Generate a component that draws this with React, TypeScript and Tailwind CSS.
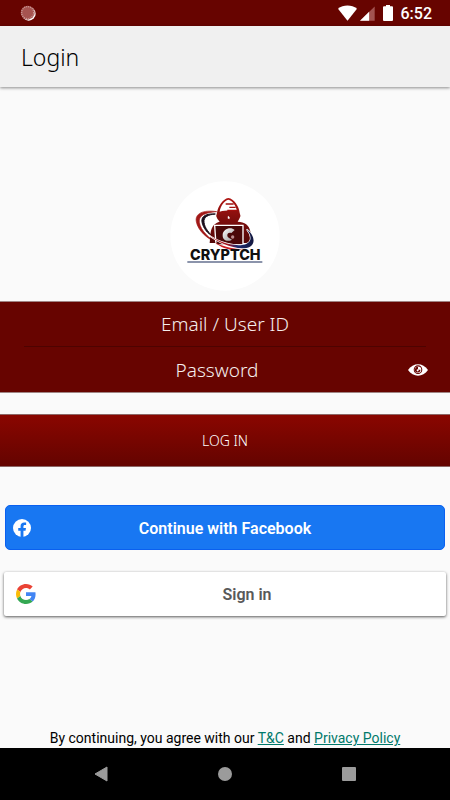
import React, { useState } from 'react'

function SyncIcon() {
    return (
        <svg viewBox="0 0 48 48" className="h-4 w-4" aria-hidden="true">
            <circle cx="26" cy="26" r="21" fill="#ffffff" />
            <circle cx="23" cy="23" r="21" fill="#a65350" />
            <circle cx="23" cy="23" r="18" fill="none" stroke="#c99a98" strokeWidth="4" strokeDasharray="3 3" />
        </svg>
    )
}

function StatusBar() {
    return (
        <div className="flex h-[26px] shrink-0 items-center justify-between bg-[#670400] pr-[18px] pl-5 text-white">
            <SyncIcon />
            <div className="flex items-center">
                <svg viewBox="0 0 57 48" className="h-4 w-[19px]" aria-hidden="true">
                    <path d="M0 11 C16 -2 41 -2 57 11 L28.500 47 Z" fill="#ffffff" />
                </svg>
                <svg viewBox="0 0 46 48" className="ml-[3px] h-4 w-[15px]" aria-hidden="true">
                    <path d="M45 4 V48 H0 Z" fill="#a35350" />
                    <path d="M28 20 V48 H0 Z" fill="#ffffff" />
                </svg>
                <svg viewBox="0 0 30 48" className="ml-2 h-4 w-[10px]" aria-hidden="true">
                    <path d="M9 0 H21 V4 H27 Q30 4 30 7 V45 Q30 48 27 48 H3 Q0 48 0 45 V7 Q0 4 3 4 H9 Z" fill="#ffffff" />
                </svg>
                <span className="ml-2 pt-0.5 text-base leading-6 font-medium">6:52</span>
            </div>
        </div>
    )
}

function Logo() {
    return (
        <svg viewBox="0 0 330 330" className="h-[110px] w-[110px]" role="img" aria-label="Cryptch">
            <defs>
                <linearGradient id="hood" x1="0" y1="0" x2="0" y2="1">
                    <stop offset="0" stopColor="#b01512" />
                    <stop offset="0.5" stopColor="#7d0d0c" />
                    <stop offset="1" stopColor="#520707" />
                </linearGradient>
                <linearGradient id="orbit" x1="0" y1="0" x2="1" y2="0">
                    <stop offset="0" stopColor="#b5181a" />
                    <stop offset="0.45" stopColor="#a01622" />
                    <stop offset="0.65" stopColor="#1c2d72" />
                    <stop offset="1" stopColor="#14183f" />
                </linearGradient>
                <linearGradient id="letter" x1="0" y1="0" x2="1" y2="1">
                    <stop offset="0" stopColor="#ffffff" />
                    <stop offset="1" stopColor="#9a9a9a" />
                </linearGradient>
            </defs>
            <circle cx="165" cy="165" r="164" fill="#ffffff" />
            {/* orbit, left side */}
            <path d="M140 92 C100 86 74 97 79 122 C84 148 108 172 146 188 C116 172 92 149 88 124 C85 104 105 94 140 92 Z" fill="#a11817" stroke="#a11817" strokeWidth="2" />
            <path d="M136 99 C109 97 93 105 96 123 C99 141 113 158 132 171 C117 156 104 141 102 124 C100 108 114 101 136 99 Z" fill="#190d1b" stroke="#190d1b" strokeWidth="3" />
            {/* hood and shoulders */}
            <path d="M175 51 C192 53 207 76 209 95 Q214 104 208 113 L203 122 C224 123 238 132 241 151 L246 186 H119 L122 154 C125 135 136 125 149 122 L142 113 Q136 104 141 95 C144 76 159 53 175 51 Z" fill="url(#hood)" />
            <path d="M175 56 C187 58 198 74 201 90 C188 88 165 88 149 92 C151 75 163 59 175 56 Z" fill="#ffffff" />
            <path d="M167 69 H191 M178 79 H197 M172 88 H201" stroke="#a3100e" strokeWidth="4" />
            <path d="M174 104 L179 109 L178 115 L173 112 Z" fill="#ffffff" />
            {/* laptop */}
            <path d="M134 133 H219 V192 H138 Z" fill="#4a0808" stroke="#ffffff" strokeWidth="4" />
            <path d="M194 147 C182 136 159 144 158 161 C157 178 172 184 186 176 L176 170 C169 166 171 152 184 156 Z" fill="url(#letter)" />
            <circle cx="188" cy="168" r="5" fill="#b98a8b" />
            {/* orbit, front side */}
            <path d="M110 157 C140 184 203 201 230 188 C247 180 244 162 230 145 C251 160 259 185 240 197 C211 212 146 190 110 157 Z" fill="#ffffff" stroke="#ffffff" strokeWidth="4" />
            <path d="M110 157 C140 184 203 201 230 188 C247 180 244 162 230 145 C251 160 259 185 240 197 C211 212 146 190 110 157 Z" fill="url(#orbit)" />
            <path d="M134 184 C162 198 194 206 218 203 C193 213 158 205 134 184 Z" fill="#c91c1f" />
            <text x="166" y="238" textAnchor="middle" fontSize="43" className="font-[Inter] font-extrabold" fill="#101010">CRYPTCH</text>
            <path d="M52 243 H277" stroke="#65718f" strokeWidth="4" />
        </svg>
    )
}

function FacebookIcon() {
    return (
        <svg viewBox="0 0 24 24" className="h-[18px] w-[18px]" aria-hidden="true">
            <circle cx="12" cy="12" r="12" fill="#ffffff" />
            <path d="M10.100 24 V15.500 H7 V12 H10.100 V9.400 C10.100 6.300 12 4.600 14.800 4.600 C16.100 4.600 17.500 4.800 17.500 4.800 V7.900 H15.900 C14.400 7.900 13.900 8.800 13.900 9.800 V12 H17.300 L16.700 15.500 H13.900 V24 Z" fill="#1877f2" />
        </svg>
    )
}

function GoogleIcon() {
    return (
        <svg viewBox="0 0 48 48" className="h-5 w-5" aria-hidden="true">
            <path fill="#EA4335" d="M24 9.500c3.540 0 6.710 1.220 9.210 3.600l6.850-6.850C35.900 2.380 30.470 0 24 0 14.620 0 6.510 5.380 2.560 13.220l7.980 6.190C12.430 13.720 17.740 9.500 24 9.500z" />
            <path fill="#4285F4" d="M46.980 24.550c0-1.570-.15-3.090-.38-4.550H24v9.020h12.940c-.58 2.960-2.260 5.480-4.780 7.180l7.730 6c4.510-4.180 7.090-10.360 7.090-17.650z" />
            <path fill="#FBBC05" d="M10.530 28.590c-.48-1.450-.76-2.990-.76-4.590s.27-3.140.76-4.590l-7.980-6.190C.92 16.460 0 20.120 0 24c0 3.880.92 7.540 2.560 10.780l7.970-6.190z" />
            <path fill="#34A853" d="M24 48c6.480 0 11.930-2.130 15.890-5.810l-7.730-6c-2.150 1.450-4.920 2.300-8.160 2.300-6.260 0-11.570-4.220-13.470-9.910l-7.980 6.190C6.510 42.620 14.620 48 24 48z" />
        </svg>
    )
}

function EyeIcon() {
    return (
        <svg viewBox="0 0 58 34" className="h-3 w-5" aria-hidden="true">
            <path d="M0 17 C15 -5 43 -5 58 17 C43 39 15 39 0 17 Z" fill="#ffffff" />
            <circle cx="29" cy="16" r="11" fill="none" stroke="#670400" strokeWidth="3" />
            <path d="M29 8 V16 H36 A8 8 0 1 1 29 8 Z" fill="#670400" />
            <circle cx="28" cy="18" r="3" fill="#ffffff" />
        </svg>
    )
}

export default function App() {
    const [showPassword, setShowPassword] = useState(false)

    return (
        <div className="flex min-h-screen flex-col bg-[#fafafa] font-[Roboto,sans-serif]">
            <StatusBar />

            <header className="flex h-[61px] shrink-0 items-center bg-[#f0f0f0] px-[21px] shadow-[0_1px_3px_rgba(0,0,0,0.45)]">
                <h1 className="font-['Noto_Sans','Open_Sans',sans-serif] text-[23px] leading-8 font-light text-black">Login</h1>
            </header>

            <main className="flex flex-1 flex-col">
                <div className="flex justify-center pt-[94px] pb-[10px]">
                    <Logo />
                </div>

                <form onSubmit={(e) => e.preventDefault()} className="font-['Noto_Sans','Open_Sans',sans-serif] font-light text-white">
                    <div className="border-y border-[#a08584] bg-[#670400] px-6">
                        <div className="border-b border-[#4d0300]">
                            <input
                                type="text"
                                aria-label="Email / User ID"
                                placeholder="Email / User ID"
                                className="block h-11 w-full bg-transparent text-center text-[19px] outline-none placeholder:text-[#f5eeed]"
                            />
                        </div>
                        <div className="-mr-0.5 flex items-center">
                            <input
                                type={showPassword ? 'text' : 'password'}
                                aria-label="Password"
                                placeholder="Password"
                                className="block h-[45px] w-full min-w-0 flex-1 bg-transparent pl-0.5 text-center text-[19px] outline-none placeholder:text-[#f5eeed]"
                            />
                            <button type="button" aria-label="Show password" onClick={() => setShowPassword(!showPassword)}>
                                <EyeIcon />
                            </button>
                        </div>
                    </div>

                    <button
                        type="submit"
                        className="mt-[21px] block h-[53px] w-full border-y border-[#8d6665] bg-linear-to-b from-[#8a0600] to-[#640400] text-center text-sm font-light"
                    >
                        LOG IN
                    </button>
                </form>

                <div className="flex flex-col gap-[22px] px-1 pt-[38px]">
                    <button
                        type="button"
                        className="relative mx-px flex h-[45px] items-center justify-center rounded-[5px] border border-[#0a60f0] bg-[#1877f2] pt-0.5 text-base font-semibold text-white"
                    >
                        <span className="absolute inset-y-0 left-[7px] flex items-center">
                            <FacebookIcon />
                        </span>
                        Continue with Facebook
                    </button>
                    <button
                        type="button"
                        className="flex h-11 items-center rounded-xs bg-white px-3 text-base font-semibold text-[#595959] shadow-[0_1px_3px_rgba(0,0,0,0.65)]"
                    >
                        <GoogleIcon />
                        <span className="flex-1 pt-0.5 pl-6 text-center">Sign in</span>
                    </button>
                </div>

                <p className="mt-auto text-center text-sm leading-5 text-black">
                    By continuing, you agree with our{' '}
                    <a href="#terms" className="text-[#00796b] underline">T&amp;C</a> and{' '}
                    <a href="#privacy" className="text-[#00796b] underline">Privacy Policy</a>
                </p>
            </main>

            <nav className="flex h-[52px] shrink-0 items-center justify-center gap-[110px] bg-black text-[#9b9b9b]">
                <button type="button" aria-label="Back">
                    <svg viewBox="0 0 14 16" className="h-4 w-[14px]" fill="currentColor" aria-hidden="true">
                        <path d="M13 1 V15 L1 8 Z" stroke="currentColor" strokeLinejoin="round" />
                    </svg>
                </button>
                <button type="button" aria-label="Home">
                    <span className="block h-[14px] w-[14px] rounded-full bg-[#9b9b9b]" />
                </button>
                <button type="button" aria-label="Recent apps">
                    <span className="block h-[14px] w-[14px] rounded-[1px] bg-[#9b9b9b]" />
                </button>
            </nav>
        </div>
    )
}
